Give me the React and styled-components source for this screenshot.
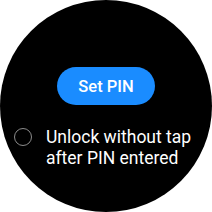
import React, { useState } from 'react';
import styled, { createGlobalStyle } from 'styled-components';

const GlobalStyle = createGlobalStyle`
  html, body {
    margin: 0;
    padding: 0;
    background: #ffffff;
  }
  body {
    font-family: Roboto, "Noto Sans", sans-serif;
  }
`

const Watch = styled.div`
  width: 212px;
  height: 212px;
  border-radius: 50%;
  background: #000000;
  display: flex;
  flex-direction: column;
  align-items: center;
  padding-top: 67px;
  box-sizing: border-box;
  overflow: hidden;
`
const PinButton = styled.button`
  width: 98px;
  height: 38px;
  border: none;
  border-radius: 19px;
  background: #1a8cff;
  color: #ffffff;
  font-family: Roboto, sans-serif;
  font-size: 16.5px;
  font-weight: 500;
  padding: 0;
  cursor: pointer;
`
const OptionRow = styled.label`
  display: flex;
  align-items: flex-start;
  gap: 14px;
  width: 100%;
  box-sizing: border-box;
  padding-left: 14px;
  margin-top: 23px;
  cursor: pointer;
`
const Radio = styled.span`
  flex: none;
  width: 18px;
  height: 18px;
  box-sizing: border-box;
  border-radius: 50%;
  border: 1.5px solid ${p => (p.checked ? '#1a8cff' : '#8c8c8c')};
`
const OptionText = styled.span`
  color: #ffffff;
  font-size: 17.5px;
  line-height: 21px;
  margin-top: -1px;
`

const App = () => {
  const [checked, setChecked] = useState(false);

  return (
    <>
      <GlobalStyle />
      <Watch>
        <PinButton>Set PIN</PinButton>
        <OptionRow onClick={() => setChecked(!checked)}>
          <Radio checked={checked} />
          <OptionText>Unlock without tap<br />after PIN entered</OptionText>
        </OptionRow>
      </Watch>
    </>
  )
}

export default App;
